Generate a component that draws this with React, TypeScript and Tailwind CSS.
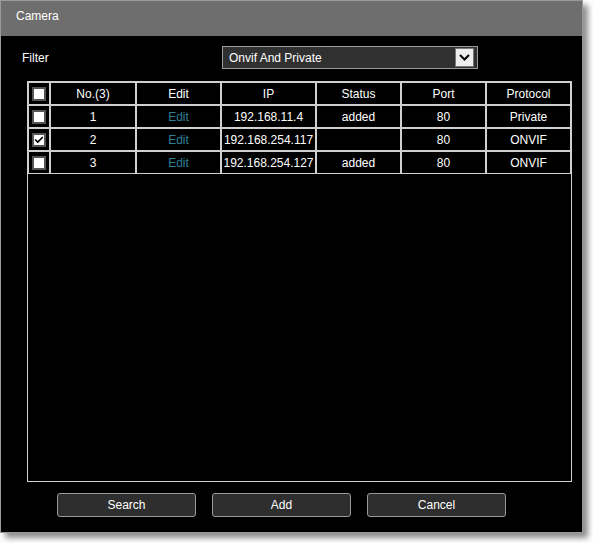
import { Check } from "lucide-react"

interface CameraRow {
  no: number
  ip: string
  status: string
  port: number
  protocol: string
  checked: boolean
}

const rows: CameraRow[] = [
  { no: 1, ip: "192.168.11.4", status: "added", port: 80, protocol: "Private", checked: false },
  { no: 2, ip: "192.168.254.117", status: "", port: 80, protocol: "ONVIF", checked: true },
  { no: 3, ip: "192.168.254.127", status: "added", port: 80, protocol: "ONVIF", checked: false },
]

const Checkbox = ({ checked }: { checked: boolean }) => (
  <div className="mx-auto flex h-[14px] w-[14px] items-center justify-center border-2 border-[#555] bg-white">
    {checked && <Check size={12} strokeWidth={4} className="text-black" />}
  </div>
)

const cell = "h-[23px] border border-[#d0d0d0] p-0 text-center align-middle text-[12px] text-white"

export default function App() {
  return (
    <div className="min-h-[543px] bg-white font-['Liberation_Sans',Arial,sans-serif]">
      <div className="flex h-[533px] w-[583px] flex-col border border-[#9a9a9a] bg-black shadow-[5px_5px_6px_rgba(0,0,0,0.45)]">
        <div className="flex h-[35px] shrink-0 items-start bg-[#6e6e6e] pl-[15px] pt-[6px] text-[12px] text-white">
          Camera
        </div>

        <div className="mt-[10px] flex h-[23px] items-center pl-[21px]">
          <span className="w-[200px] text-[12px] text-white">Filter</span>
          <div className="flex h-[23px] w-[256px] items-center justify-between border border-[#9a9a9a] bg-[#303030] pl-[6px] pr-[3px]">
            <span className="text-[12px] text-white">Onvif And Private</span>
            <div className="flex h-[19px] w-[19px] items-center justify-center border border-[#777] bg-[#eeeeee]">
              <svg width="11" height="7" viewBox="0 0 11 7">
                <path d="M1 1l4.5 4.5L10 1" fill="none" stroke="#000" strokeWidth="2" />
              </svg>
            </div>
          </div>
        </div>

        <div className="ml-[26px] mt-[12px] h-[401px] w-[545px] border border-[#d0d0d0]">
          <table className="w-full table-fixed border-separate border-spacing-0">
            <colgroup>
              <col className="w-[22px]" />
              <col className="w-[86px]" />
              <col className="w-[85px]" />
              <col className="w-[95px]" />
              <col className="w-[85px]" />
              <col className="w-[85px]" />
              <col />
            </colgroup>
            <thead>
              <tr>
                <th className={cell + " font-normal"}>
                  <Checkbox checked={false} />
                </th>
                <th className={cell + " font-normal"}>No.(3)</th>
                <th className={cell + " font-normal"}>Edit</th>
                <th className={cell + " font-normal"}>IP</th>
                <th className={cell + " font-normal"}>Status</th>
                <th className={cell + " font-normal"}>Port</th>
                <th className={cell + " font-normal"}>Protocol</th>
              </tr>
            </thead>
            <tbody>
              {rows.map((r) => (
                <tr key={r.no}>
                  <td className={cell}>
                    <Checkbox checked={r.checked} />
                  </td>
                  <td className={cell}>{r.no}</td>
                  <td className={cell + " !text-[#2f7f96]"}>Edit</td>
                  <td className={cell + " whitespace-nowrap"}>{r.ip}</td>
                  <td className={cell}>{r.status}</td>
                  <td className={cell}>{r.port}</td>
                  <td className={cell}>{r.protocol}</td>
                </tr>
              ))}
            </tbody>
          </table>
        </div>

        <div className="ml-[56px] mt-[11px] flex gap-4">
          {["Search", "Add", "Cancel"].map((label) => (
            <button
              key={label}
              className="h-[24px] w-[139px] rounded-[3px] border border-[#999] bg-[#2e2e2e] text-[12px] text-white"
            >
              {label}
            </button>
          ))}
        </div>
      </div>
    </div>
  )
}
